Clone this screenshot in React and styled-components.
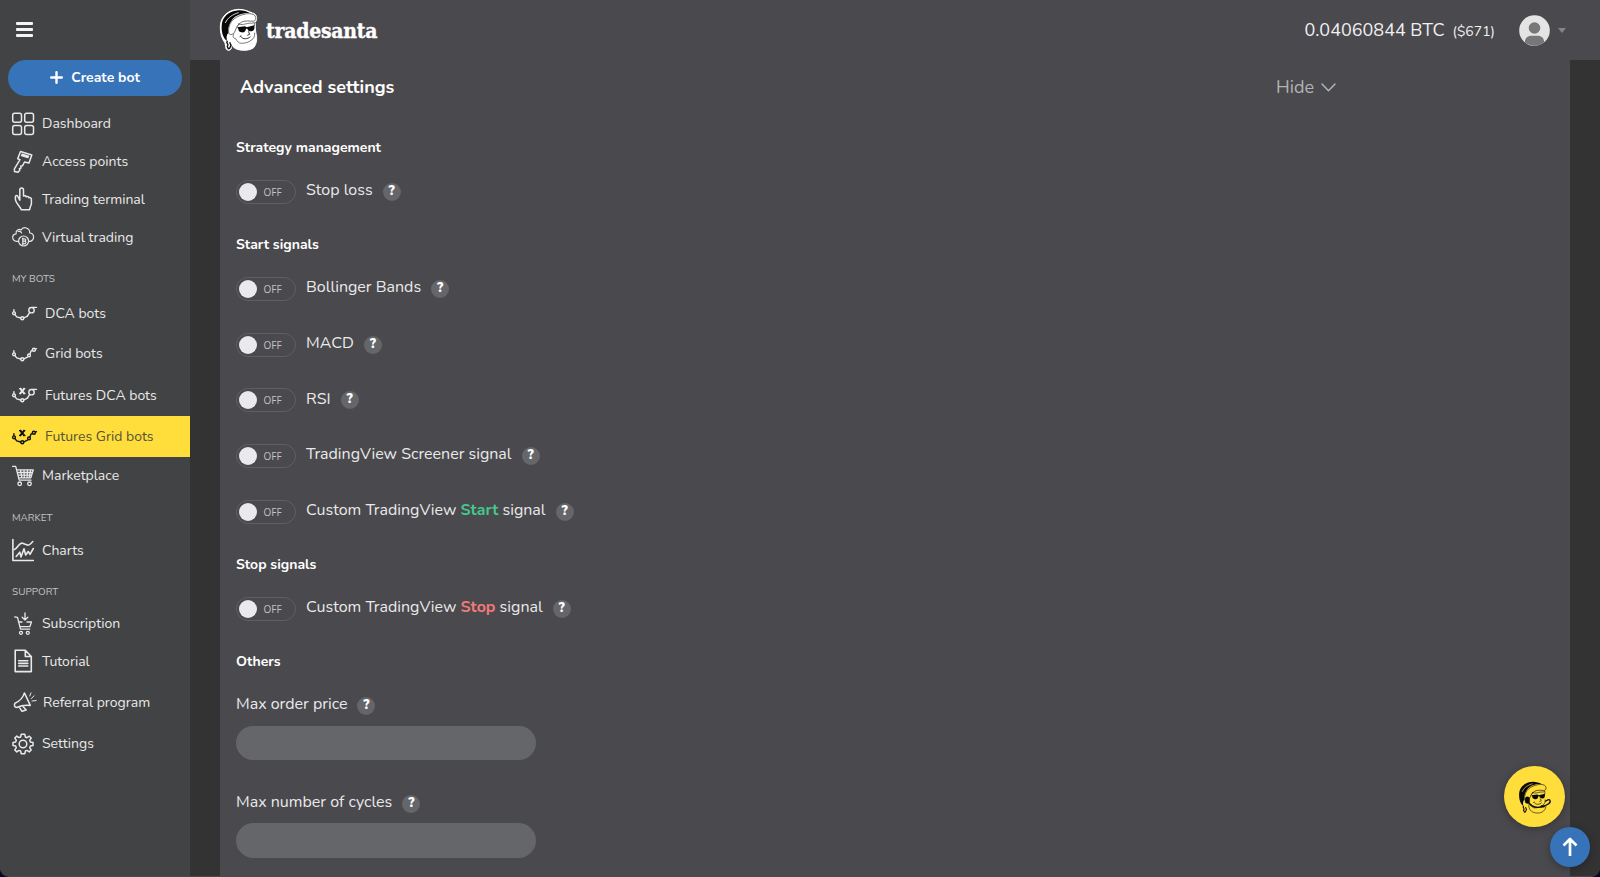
import styled, { createGlobalStyle, css } from "styled-components";

const GlobalStyle = createGlobalStyle`
  * {
    box-sizing: border-box;
  }

  body {
    margin: 0;
    background: #0b0524;
    font-family: Nunito, Lato, sans-serif;
    color: #e9e9ea;
  }
`;

const Window = styled.div`
  display: flex;
  position: relative;
  height: 877px;
  overflow: hidden;
  border-bottom: 1px solid #4d484c;
  border-radius: 0 0 9px 9px;
  background: #333333;
`;

const Sidebar = styled.aside`
  display: flex;
  flex-direction: column;
  flex: none;
  width: 190px;
  background: #424344;
`;

const MenuButton = styled.button`
  display: flex;
  flex-direction: column;
  gap: 3px;
  width: 17px;
  margin: 22px 0 23px 16px;
  padding: 0;
  border: 0;
  background: none;
`;

const MenuBar = styled.span`
  height: 3px;
  border-radius: 1px;
  background: #f4f4f4;
`;

const CreateButton = styled.button`
  display: flex;
  align-items: center;
  justify-content: center;
  gap: 8px;
  height: 36px;
  margin: 0 8px 8px;
  padding: 0 0 1px;
  border: 0;
  border-radius: 18px;
  background: #3673b8;
  color: #fff;
  font: 700 14px Nunito, Lato, sans-serif;
`;

const NavItem = styled.a`
  display: flex;
  align-items: center;
  gap: 8px;
  flex: none;
  height: ${(p) => p.$height}px;
  padding-left: 12px;
  font-size: 14px;
  white-space: nowrap;

  ${(p) =>
    p.$active &&
    css`
      background: #ffde3b;
      color: #57523a;

      svg {
        color: #111;
      }
    `}
`;

const NavLabel = styled.div`
  flex: none;
  height: ${(p) => p.$height}px;
  margin-top: ${(p) => p.$top}px;
  padding-left: 12px;
  color: #c4c4c5;
  font-size: 10px;
  line-height: ${(p) => p.$height}px;
`;

const Svg = styled.svg`
  flex: none;
  overflow: visible;
  fill: none;
  stroke: currentColor;
  stroke-width: ${(p) => p.$stroke || 1.5};
  stroke-linecap: round;
  stroke-linejoin: round;
`;

const Content = styled.div`
  display: flex;
  flex-direction: column;
  flex: 1;
`;

const Header = styled.header`
  display: flex;
  align-items: center;
  flex: none;
  height: 60px;
  padding: 0 34px 0 29px;
  background: #4a494d;
`;

const Brand = styled.div`
  display: flex;
  align-items: center;
  gap: 9px;
  flex: 1;
  color: #fff;
  font: 700 21px "DejaVu Serif Condensed", "DejaVu Serif", serif;
  letter-spacing: -0.25px;
  -webkit-text-stroke: 0.35px #fff;

  svg {
    margin-bottom: 2px;
  }
`;

const Balance = styled.div`
  color: #f0f0f0;
  font-size: 18px;
`;

const Dollars = styled.span`
  margin-left: 8px;
  font-size: 14px;
`;

const Avatar = styled.svg`
  margin-left: 24px;
`;

const Caret = styled.svg`
  margin-left: 8px;
`;

const Panel = styled.main`
  flex: 1;
  margin: 0 30px;
  padding: 0 16px;
  background: #4a494d;
`;

const PanelHeader = styled.div`
  display: flex;
  align-items: center;
  justify-content: space-between;
  height: 54px;
  margin-bottom: 18px;
  padding: 0 218px 0 4px;
`;

const PanelTitle = styled.h1`
  margin: 0;
  color: #fff;
  font-size: 18px;
  font-weight: 700;
`;

const HideButton = styled.button`
  display: flex;
  align-items: center;
  gap: 7px;
  padding: 0;
  border: 0;
  background: none;
  color: #b3b3b4;
  font: 18px Nunito, Lato, sans-serif;
`;

const GroupTitle = styled.h2`
  height: 30px;
  margin: 0 0 2px;
  color: #fff;
  font-size: 14px;
  font-weight: 700;
  line-height: 32px;
`;

const Group = styled.section`
  margin-bottom: 9.2px;
`;

const ToggleRow = styled.div`
  display: flex;
  align-items: center;
  height: 55.8px;
`;

const Toggle = styled.button`
  display: flex;
  align-items: center;
  gap: 6.5px;
  width: 60px;
  height: 24px;
  margin-right: 10px;
  padding: 0 2px;
  border: 1px solid #5f5f62;
  border-radius: 12px;
  background: none;
  color: #c3c3c5;
  font: 10px "Open Sans", sans-serif;
`;

const Knob = styled.span`
  width: 18px;
  height: 18px;
  border-radius: 50%;
  background: #e9e9ee;
`;

const Label = styled.span`
  padding-bottom: 3.6px;
  font-size: 16px;
  line-height: 20px;
  white-space: pre;
`;

const Accent = styled.b`
  color: ${(p) => p.$color};
`;

const Help = styled.span`
  width: 18px;
  height: 18px;
  margin-left: 10px;
  border-radius: 50%;
  background: #656669;
  color: #fff;
  font-size: 13px;
  font-weight: 900;
  line-height: 17px;
  text-align: center;
`;

const Field = styled.div`
  margin-top: 18px;

  & + & {
    margin-top: 31.5px;
  }
`;

const FieldLabel = styled.label`
  display: flex;
  align-items: center;
  height: 24px;
  margin-bottom: 7.5px;
`;

const Input = styled.input`
  display: block;
  width: 300px;
  height: 34.6px;
  border: 0;
  border-radius: 17.5px;
  background: #656669;
`;

const Floating = styled.button`
  position: absolute;
  right: ${(p) => p.$right}px;
  bottom: ${(p) => p.$bottom}px;
  display: flex;
  align-items: center;
  justify-content: center;
  width: ${(p) => p.$size}px;
  height: ${(p) => p.$size}px;
  padding: 0;
  border: 0;
  border-radius: 50%;
  background: ${(p) => p.$color};
  box-shadow: 0 2px 8px rgba(0, 0, 0, 0.3);
`;

const ChatButton = styled(Floating)`
  padding-right: 6px;
`;

const Santa = ({ width, skin, line, headset }) => (
  <svg width={width} height={(width * 128) / 114} viewBox="12 24 114 128" overflow="visible">
    <path
      fill={skin}
      stroke={skin}
      strokeWidth="3"
      d="M16 78C17 48 42 28 72 28C88 28 103 35 112 39C123 41 127 50 124 62L120 67C122 78 120 88 123 100C127 116 125 132 116 143C102 153 78 153 62 146C55 142 50 136 47 129L49 146C44 153 37 152 33 146L30 129C20 116 15 98 16 78Z"
    />
    <path
      fill="#080808"
      d="M20 79C20 51 43 32 72 31C86 31 96 35 105 39C83 38 62 44 51 60C42 72 39 84 40 99C34 105 34 113 36 123C25 115 19 98 20 79Z"
    />
    <path
      fill={skin}
      stroke={line}
      strokeWidth="2.5"
      d="M41 99C39 81 46 66 57 57C70 46 96 38 110 42C119 43 124 50 122 59C120 66 109 63 98 63C83 62 74 69 68 77C62 85 61 96 55 101C50 105 43 105 41 99Z"
    />
    <path fill="none" stroke={skin} strokeWidth="2.5" d="M31 69C38 52 54 43 71 38" />
    <path
      fill="none"
      stroke={line}
      strokeWidth="2.4"
      d="M66 80L74 70M69 71C80 77 91 71 101 70C108 69 113 71 118 67V78M57 101C52 109 55 116 61 115C67 124 71 130 79 130C93 130 102 126 111 119C116 116 120 109 119 98"
    />
    {headset && <path fill="none" stroke={line} strokeWidth="2.4" d="M57 117C56 135 66 147 83 149C102 152 119 144 122 124" />}
    <path
      fill="#080808"
      d="M66 82L90 79L95 82L118 76C120 88 116 94 108 94C101 94 99 91 97 86L93 86C92 94 88 98 80 97C73 96 70 93 70 86Z"
    />
    <path fill="none" stroke="#080808" strokeWidth="2.5" d="M100 94L104 103L97 106M77 109C83 119 98 118 106 110M74 110L79 107" />
    <path fill="none" stroke="#080808" strokeWidth="4" d="M38 123C30 129 43 132 38 137C33 141 43 142 39 148M44 127L48 136L43 147" />
    {headset && (
      <g fill="none" stroke="#080808">
        <path strokeWidth="5" d="M53 105C66 126 88 132 112 124C127 119 143 111 137 101C134 96 126 101 119 106" />
        <rect x="43" y="88" width="17" height="25" rx="7" fill="#080808" />
        <rect x="102" y="121" width="15" height="7" rx="3" fill="#080808" />
      </g>
    )}
  </svg>
);

const icons = {
  dashboard: (
    <Svg width="22" height="24" viewBox="0 0 22 24">
      <rect x=".7" y="1.2" width="8.8" height="9" rx="2" />
      <rect x="12.7" y="1.2" width="8.8" height="9" rx="2" />
      <rect x=".7" y="13.4" width="8.8" height="9" rx="2" />
      <rect x="12.7" y="13.4" width="8.8" height="9" rx="2" />
    </Svg>
  ),
  key: (
    <Svg width="22" height="24" viewBox="0 0 22 24">
      <path d="M8.5 1.5L19.8 5L17 13L12.5 12L10.6 15.7L8.8 16L9 18L7.4 18.7L7.8 20.2L6 22.3L2.5 21.6L2.4 18.8L8 9.7L5.7 8.7Z" />
      <path d="M10 4.2L16.5 6.3M9.5 5.5L16 7.6" />
    </Svg>
  ),
  hand: (
    <Svg width="22" height="24" viewBox="0 0 22 24">
      <path d="M7.8 13.2V3.2C7.8.4 11.5.4 11.5 3.2V9C12.8 8.2 14 8.9 14.2 9.8C15.5 9.1 16.6 9.8 16.9 10.7C18.4 10.2 19.4 11 19.4 12.5V16.3C19.4 18.5 17.8 20 17.6 22.7H9.2C8.7 19.8 3.8 16.3 3.4 12.5V9.8C3.4 8.2 5.7 8.1 6 10L7.8 13.2Z" />
    </Svg>
  ),
  cloud: (
    <Svg width="22" height="24" viewBox="0 0 22 24" $stroke={1.2}>
      <path d="M6.5 16.3H4.8C-.7 15.8-.4 9.2 4.1 8.8C3.4 5.1 7.2 3.4 9 5C11.2.9 18 2.7 17.7 8C22.7 8.3 22.8 15 18.3 16.3H17M6.2 6.5C8 6 9.2 7 9.5 8" />
      <circle cx="11.6" cy="16" r="5" />
      <path d="M10.4 13.8H12.3C14.3 13.8 14.2 16.2 12.3 16.2H10.7M12.3 16.2C14.5 16.3 14.2 18.8 12.3 18.8H10.4M10.8 13V19.6" />
    </Svg>
  ),
  cart: (
    <Svg width="22" height="22" viewBox="0 0 22 22" $stroke={1.3}>
      <path d="M.6 1.4H3.7L7.2 15.2H19M4.6 4.8H21.3L18.8 12.8H6.6M5.3 7.5H20.5M6 10.2H19.7M8.5 5L9.8 12.7M12 5L12.3 12.7M15.5 5L15 12.7M18.6 5L17.2 12.7" />
      <circle cx="7.7" cy="18.8" r="1.8" />
      <circle cx="17.5" cy="18.8" r="1.8" />
    </Svg>
  ),
  chart: (
    <Svg width="22" height="24" viewBox="0 0 22 24" $stroke={1.6}>
      <path d="M.9 1.5V22.5H21.3M2.5 11.5C5.5 10.4 6.7 5.2 9.8 5.1L16 7.2C18 7 19.5 4.6 20.8 3.5M4.2 18.5L7.8 14.2L9 19L12 10.7L13.7 17L16.2 13.5L18 16.3L21.3 10.5" />
    </Svg>
  ),
  subscription: (
    <Svg width="22" height="24" viewBox="0 0 22 24" $stroke={1.3}>
      <path d="M2.7 4.8L5.5 5.3L8.5 17.2H17.6M6.5 10H10M15 10H19.5L17.8 14.7H7.9M13 1V7.7M10.2 5.3L13 8L15.8 5.3" />
      <circle cx="9" cy="20.8" r="1.5" />
      <circle cx="15.8" cy="20.8" r="1.5" />
    </Svg>
  ),
  document: (
    <Svg width="22" height="24" viewBox="0 0 22 24" $stroke={1.6}>
      <path d="M3.2 1.3H13.3L19.3 7.5V22.6H3.2ZM13.3 1.3V7.5H19.3M6.7 11.8H15.8M6.7 14.4H15.8M6.7 17H15.8" />
    </Svg>
  ),
  megaphone: (
    <Svg width="23" height="20" viewBox="0 0 23 20">
      <path d="M3 11.2C7 9.5 11 6 12.4.9L18.3 13.4C14 12.8 9 13.5 4.5 15.5C2.5 15.5 1.9 12.7 3 11.2ZM7.2 15L10 19.3L14.2 18L11 14.5" />
      <path strokeWidth="1" d="M17.7 4L19 .9M19.4 6.5L22 3.8M20 9L24.2 8.6" />
    </Svg>
  ),
  gear: (
    <Svg width="22" height="22" viewBox="0 0 22 22">
      <path d="M9.2 1.3H12.8L13.4 4L15 4.7L17.3 3.2L19.2 5L17.7 7.4L18.4 9L21 9.6V12.4L18.4 13L17.7 14.6L19.2 17L17.2 18.9L15 17.4L13.4 18L12.8 20.7H9.2L8.6 18L7 17.4L4.8 18.9L2.8 17L4.3 14.6L3.6 13L1 12.4V9.6L3.6 9L4.3 7.4L2.8 5L4.8 3.1L7 4.6L8.6 4Z" />
      <circle cx="11" cy="11" r="3.8" />
    </Svg>
  ),
};

// Node line shared by the bot entries: "dca" ends in a large ring, "grid" in two small ones.
const BotIcon = ({ kind, futures }) => (
  <Svg width="25" height="16" viewBox="0 0 25 16" $stroke={1.4}>
    <circle cx="2" cy="8.3" r="1.4" />
    <circle cx="10.3" cy="13.3" r="1.5" />
    <path d="M1.9 6.6V4.6M3 9.6L4.7 11.9L8.7 13M11.9 12.8L15.4 11.2" />
    {kind === "dca" ? (
      <>
        <circle cx="19.5" cy="5.2" r="2.7" />
        <path d="M15.4 11.2L17.7 7.4M20 2.4H24.5" />
      </>
    ) : (
      <>
        <circle cx="17" cy="9.4" r="1.4" />
        <circle cx="21.9" cy="3.7" r="1.5" />
        <path d="M17.9 8L19 5.2L20.4 4.4M23.4 3.2L24.5 2.7" />
      </>
    )}
    {futures && <path strokeWidth="2" strokeLinecap="butt" d="M7.9 1.2L12.6 6.8M12.6 1.2L7.9 6.8" />}
    {futures && <path strokeWidth="1" strokeLinecap="butt" d="M7 1.6H9.3M11.5 1.6H13.3M7 6.6H9.1M11.3 6.6H13.5" />}
  </Svg>
);

const nav = [
  { text: "Dashboard", icon: icons.dashboard, height: 39 },
  { text: "Access points", icon: icons.key, height: 37 },
  { text: "Trading terminal", icon: icons.hand, height: 38 },
  { text: "Virtual trading", icon: icons.cloud, height: 38 },
  { label: "MY BOTS", height: 28, top: 9 },
  { text: "DCA bots", icon: <BotIcon kind="dca" />, height: 40 },
  { text: "Grid bots", icon: <BotIcon kind="grid" />, height: 41 },
  { text: "Futures DCA bots", icon: <BotIcon kind="dca" futures />, height: 42 },
  { text: "Futures Grid bots", icon: <BotIcon kind="grid" futures />, height: 41, active: true },
  { text: "Marketplace", icon: icons.cart, height: 37 },
  { label: "MARKET", height: 26, top: 11 },
  { text: "Charts", icon: icons.chart, height: 38 },
  { label: "SUPPORT", height: 26, top: 10 },
  { text: "Subscription", icon: icons.subscription, height: 37 },
  { text: "Tutorial", icon: icons.document, height: 38 },
  { text: "Referral program", icon: icons.megaphone, height: 44 },
  { text: "Settings", icon: icons.gear, height: 39 },
];

const Setting = ({ children }) => (
  <ToggleRow>
    <Toggle>
      <Knob />
      OFF
    </Toggle>
    <Label>{children}</Label>
    <Help>?</Help>
  </ToggleRow>
);

const App = () => {
  return (
    <>
      <GlobalStyle />
      <Window>
        <Sidebar>
          <MenuButton>
            <MenuBar />
            <MenuBar />
            <MenuBar />
          </MenuButton>
          <CreateButton>
            <Svg width="13" height="13" viewBox="0 0 13 13" $stroke={2.4}>
              <path d="M6.5 1.2V11.8M1.2 6.5H11.8" />
            </Svg>
            Create bot
          </CreateButton>
          {nav.map((item) =>
            item.label ? (
              <NavLabel key={item.label} $height={item.height} $top={item.top}>
                {item.label}
              </NavLabel>
            ) : (
              <NavItem key={item.text} $height={item.height} $active={item.active}>
                {item.icon}
                {item.text}
              </NavItem>
            )
          )}
        </Sidebar>
        <Content>
          <Header>
            <Brand>
              <Santa width={38} skin="#fff" line="#555" />
              tradesanta
            </Brand>
            <Balance>
              0.04060844 BTC
              <Dollars>($671)</Dollars>
            </Balance>
            <Avatar width="31" height="31" viewBox="0 0 31 31">
              <circle cx="15.5" cy="15.5" r="15.3" fill="#e4e4e4" />
              <circle cx="15.5" cy="13" r="5.8" fill="#77777a" />
              <path fill="#77777a" d="M5.8 27.3C6 23 8.5 20.8 12.5 20.8H18.5C22.5 20.8 25 23 25.2 27.3A15.3 15.3 0 0 1 5.8 27.3Z" />
            </Avatar>
            <Caret width="8" height="5" viewBox="0 0 8 5">
              <path d="M0 0H8L4 5Z" fill="#858588" />
            </Caret>
          </Header>
          <Panel>
            <PanelHeader>
              <PanelTitle>Advanced settings</PanelTitle>
              <HideButton>
                Hide
                <Svg width="15" height="9" viewBox="0 0 15 9">
                  <path d="M1 1L7.5 7.8L14 1" />
                </Svg>
              </HideButton>
            </PanelHeader>
            <Group>
              <GroupTitle>Strategy management</GroupTitle>
              <Setting>Stop loss</Setting>
            </Group>
            <Group>
              <GroupTitle>Start signals</GroupTitle>
              <Setting>Bollinger Bands</Setting>
              <Setting>MACD</Setting>
              <Setting>RSI</Setting>
              <Setting>TradingView Screener signal</Setting>
              <Setting>
                Custom TradingView <Accent $color="#45c78f">Start</Accent> signal
              </Setting>
            </Group>
            <Group>
              <GroupTitle>Stop signals</GroupTitle>
              <Setting>
                Custom TradingView <Accent $color="#f37a7a">Stop</Accent> signal
              </Setting>
            </Group>
            <Group>
              <GroupTitle>Others</GroupTitle>
              <Field>
                <FieldLabel>
                  <Label>Max order price</Label>
                  <Help>?</Help>
                </FieldLabel>
                <Input />
              </Field>
              <Field>
                <FieldLabel>
                  <Label>Max number of cycles</Label>
                  <Help>?</Help>
                </FieldLabel>
                <Input />
              </Field>
            </Group>
          </Panel>
        </Content>
        <ChatButton $size={61} $right={35} $bottom={49} $color="#ffde3b">
          <Santa width={30} skin="#ffde3b" line="#111" headset />
        </ChatButton>
        <Floating $size={40} $right={10} $bottom={9} $color="#3673b8">
          <Svg width="16" height="20" viewBox="0 0 16 20" color="#fff" $stroke={2.7}>
            <path strokeLinecap="butt" d="M8 19V3M1.5 8.5L8 2L14.5 8.5" />
          </Svg>
        </Floating>
      </Window>
    </>
  );
};

export default App;
